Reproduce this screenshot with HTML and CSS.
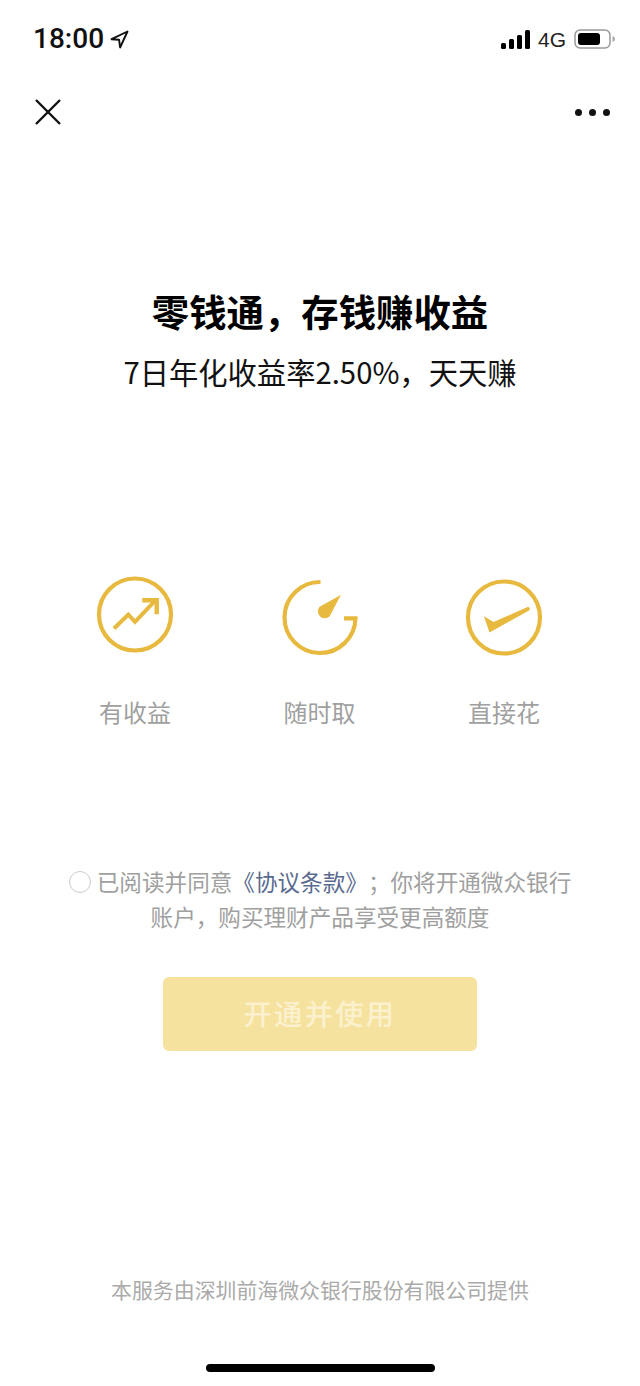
FILE: index.html
```html
<!DOCTYPE html>
<html lang="zh-CN">
<head>
<meta charset="utf-8">
<title>零钱通</title>
<link rel="stylesheet" href="styles.css">
</head>
<body>
<div class="page">
  <div class="status">
    <div class="status-left">
      <span class="time">18:00</span>
      <svg class="loc" width="19" height="19" viewBox="0 0 19 19"><path d="M17.500 1.500 1.500 9.200l7.600.6 1 7.700z" fill="none" stroke="#111" stroke-width="1.900" stroke-linejoin="round"/></svg>
    </div>
    <div class="status-right">
      <svg width="29" height="19" viewBox="0 0 29 19"><rect x="0" y="13" width="5" height="6" rx="1.500"/><rect x="8" y="9" width="5" height="10" rx="1.500"/><rect x="16" y="5" width="5" height="14" rx="1.500"/><rect x="24" y="0" width="5" height="19" rx="1.500"/></svg>
      <span class="net">4G</span>
      <svg width="42" height="20" viewBox="0 0 42 20"><rect x="1" y="1" width="35" height="18" rx="5" fill="none" stroke="#999" stroke-width="1.500"/><rect x="4" y="4" width="22" height="12" rx="3" fill="#000"/><path d="M38.500 7c1.600.5 2.500 1.500 2.500 3s-.9 2.500-2.500 3z" fill="#aaa"/></svg>
    </div>
  </div>
  <div class="nav">
    <svg width="28" height="28" viewBox="0 0 28 28"><path d="M2 2 26 26M26 2 2 26" stroke="#111" stroke-width="2.400" fill="none"/></svg>
    <div class="dots"><i></i><i></i><i></i></div>
  </div>
  <h1 class="title">零钱通，存钱赚收益</h1>
  <p class="subtitle">7日年化收益率2.50%，天天赚</p>
  <div class="features">
    <div class="feature">
      <svg width="80" height="80" viewBox="0 1.500 80 80"><circle cx="40" cy="40" r="36" fill="none" stroke="#e8b93f" stroke-width="4.200"/><path d="M19 54 33.300 40 40 47.300 59 27.300" fill="none" stroke="#e8b93f" stroke-width="4"/><path d="M47.300 25.700H61.700V39.700" fill="none" stroke="#e8b93f" stroke-width="4.400"/></svg>
      <span>有收益</span>
    </div>
    <div class="feature">
      <svg width="80" height="80" viewBox="0 0 80 80"><path d="M40.500 6A35.500 35.500 0 1 0 75.500 42.300H64" fill="none" stroke="#e8b93f" stroke-width="4.200"/><path d="M61 18.700 49.500 40.500A7 7 0 0 1 39.300 31Z" fill="#e8b93f"/></svg>
      <span>随时取</span>
    </div>
    <div class="feature">
      <svg width="80" height="80" viewBox="0 -1.500 80 80"><circle cx="40" cy="40" r="36" fill="none" stroke="#e8b93f" stroke-width="4.200"/><path d="M20 38.800 29.500 44.600 63.500 29.500C66 29 66.500 32 65 33L30 52.500 25.500 55Z" fill="#e8b93f"/></svg>
      <span>直接花</span>
    </div>
  </div>
  <div class="agree">
    <p class="agree-line"><i class="radio"></i>已阅读并同意<a class="link">《协议条款》</a>；你将开通微众银行</p>
    <p class="agree-line">账户，购买理财产品享受更高额度</p>
  </div>
  <button class="btn">开通并使用</button>
  <p class="footer">本服务由深圳前海微众银行股份有限公司提供</p>
  <div class="home"></div>
</div>
</body>
</html>
```
FILE: styles.css
```css
* { box-sizing: border-box; }
html, body { margin: 0; padding: 0; background: #fff; }
.page {
  width: 640px;
  height: 1386px;
  overflow: hidden;
  display: flex;
  flex-direction: column;
  align-items: center;
  font-family: "Noto Sans CJK SC", "Liberation Sans", sans-serif;
}
.status {
  width: 100%;
  height: 78px;
  padding: 0 24px 0 33px;
  display: flex;
  justify-content: space-between;
  align-items: center;
}
.status-left { display: flex; align-items: center; gap: 6px; }
.time { font: 500 28px/1 Roboto, "Liberation Sans", sans-serif; color: #111; }
.status-right { display: flex; align-items: center; gap: 8px; }
.net { font: 400 21px/1 "Liberation Sans", sans-serif; color: #222; }
.nav {
  width: 100%;
  height: 68px;
  padding: 0 30px 0 34px;
  display: flex;
  justify-content: space-between;
  align-items: center;
}
.dots { display: flex; gap: 7px; }
.dots i { width: 7px; height: 7px; border-radius: 50%; background: #111; }
.title {
  margin: 137px 0 0;
  font-size: 37.400px;
  line-height: 56px;
  font-weight: 700;
  color: #000;
  white-space: nowrap;
}
.subtitle {
  margin: 9px 0 0;
  font-size: 29.300px;
  line-height: 47px;
  color: #111;
  white-space: nowrap;
}
.features {
  margin-top: 181px;
  width: 469px;
  margin-left: -1px;
  display: flex;
  justify-content: space-between;
}
.feature {
  width: 100px;
  display: flex;
  flex-direction: column;
  align-items: center;
  gap: 38px;
}
.feature svg { overflow: visible; }
.feature span { font-size: 24px; line-height: 36px; color: #a0a0a0; white-space: nowrap; }
.agree {
  margin-top: 134px;
  font-size: 22.600px;
  line-height: 35px;
  color: #a0a0a0;
  text-align: center;
}
.agree-line { margin: 0; white-space: nowrap; display: flex; align-items: center; justify-content: center; }
.radio {
  width: 22px;
  height: 22px;
  border: 1.500px solid #ccc;
  border-radius: 50%;
  margin-right: 6px;
}
.link { color: #5a6a8f; }
.btn {
  margin-top: 43px;
  width: 314px;
  height: 74px;
  padding: 0 0 2px;
  border: 0;
  border-radius: 6px;
  background: #f6e29f;
  color: #fbf1ce;
  font: 500 28.200px/1 "Noto Sans CJK SC", sans-serif;
  letter-spacing: 2.400px;
}
.footer {
  margin: 220px 0 0;
  font-size: 20.900px;
  line-height: 36px;
  color: #aaa;
  white-space: nowrap;
}
.home {
  margin-top: 57px;
  width: 229px;
  height: 8px;
  border-radius: 4px;
  background: #000;
}
```
